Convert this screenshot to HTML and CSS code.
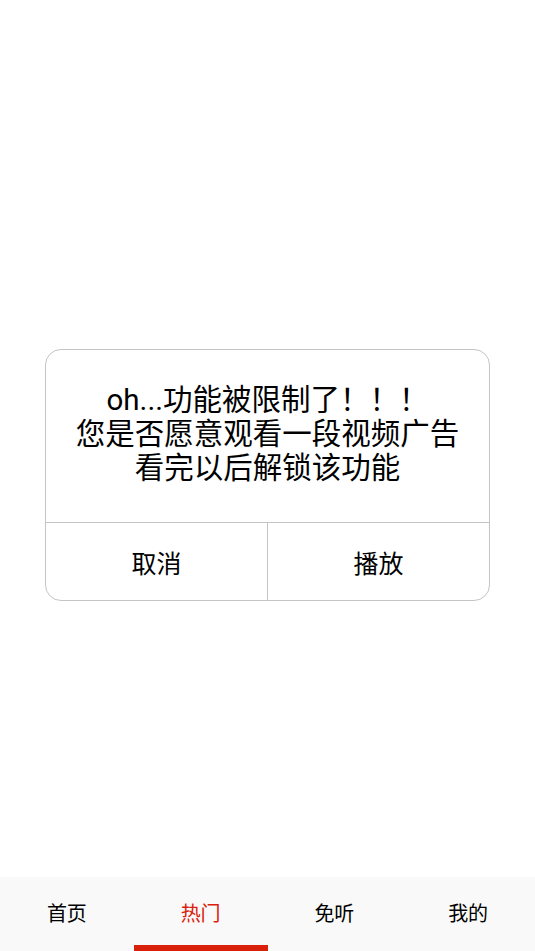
FILE: index.html
```html
<!DOCTYPE html>
<html>
<head lang="zh">
    <meta charset="UTF-8">
    <title>热门</title>
    <link rel="stylesheet" href="styles.css">
</head>
<body>
<div class="page">
    <div class="main">
        <div class="dialog">
            <div class="msg">
                <p>oh...功能被限制了！！！</p>
                <p>您是否愿意观看一段视频广告</p>
                <p>看完以后解锁该功能</p>
            </div>
            <div class="btns">
                <span class="btn">取消</span>
                <span class="btn">播放</span>
            </div>
        </div>
    </div>
    <ul class="tabs">
        <li>首页</li>
        <li class="on">热门</li>
        <li>免听</li>
        <li>我的</li>
    </ul>
</div>
</body>
</html>
```

FILE: styles.css
```css
*{
    margin: 0;
    padding: 0;
}
ul{
    list-style: none;
}
body{
    font-family: Roboto, "Noto Sans CJK SC", sans-serif;
    color: #000;
    background: #fff;
}
.page{
    height: 951px;
    display: flex;
    flex-direction: column;
}
.main{
    flex: 1;
    display: flex;
    justify-content: center;
    align-items: flex-start;
}
.dialog{
    width: 443px;
    margin-top: 349px;
    border: 1px solid #c4c4c4;
    border-radius: 16px;
    overflow: hidden;
}
.msg{
    height: 173px;
    box-sizing: border-box;
    padding-top: 33px;
    text-align: center;
    font-size: 29.5px;
    line-height: 34px;
    border-bottom: 1px solid #c4c4c4;
}
.btns{
    display: flex;
    height: 77px;
}
.btn{
    flex: 1;
    display: flex;
    align-items: center;
    justify-content: center;
    font-size: 25px;
}
.btn + .btn{
    border-left: 1px solid #c4c4c4;
}
.tabs{
    height: 74px;
    display: flex;
    background: #f9f9f9;
}
.tabs li{
    flex: 1;
    display: flex;
    align-items: center;
    justify-content: center;
    padding-bottom: 3px;
    font-size: 20px;
    position: relative;
}
.tabs li.on{
    color: #d9200b;
}
.tabs li.on:after{
    content: "";
    position: absolute;
    left: 0;
    right: 0;
    bottom: 0;
    height: 6px;
    background: #d9200b;
}
```
